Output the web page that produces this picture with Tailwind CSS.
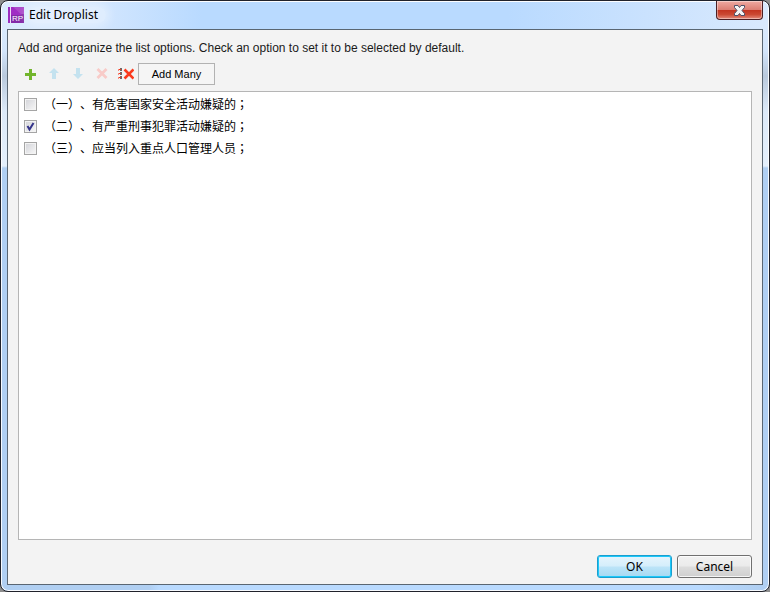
<!DOCTYPE html>
<html lang="zh-CN">
<head>
<meta charset="utf-8">
<title>Edit Droplist</title>
<script src="https://cdn.jsdelivr.net/npm/@tailwindcss/browser@4"></script>
</head>
<body class="h-dvh bg-[#8e8e8e] font-['Liberation_Sans','Noto_Sans_CJK_SC',sans-serif] text-xs text-[#1a1a1a]">
<div class="relative flex h-full flex-col rounded-lg border border-[#20222b] bg-[linear-gradient(to_bottom,#e0eefe_0px,#d3e5fb_50px,#b9c9dc_75px,#dce9f8_110px,#e4effb_165px,#b0cff2_167px,#b0cff2_100%)] px-1.5 pb-1.5 inset-ring inset-ring-white/90">
  <div class="absolute inset-x-px top-px h-7 rounded-t-md bg-[linear-gradient(to_right,#dcebfe_0px,#d4e7fe_90px,#b9daff_200px,#b9daff_66%,#d9e9fd_100%)]"></div>
  <div class="absolute inset-x-2 bottom-px h-1.5 bg-[linear-gradient(to_right,#b0cff2_140px,#b9daff_150px,#b9daff_92%,#b0cff2_100%)]"></div>
  <header class="relative flex h-7 shrink-0 items-center gap-[5px] pl-px">
    <svg class="size-4 shrink-0" viewBox="0 0 16 16">
      <path fill="#9c2cbf" d="M0 0h16v16H0z"/>
      <path fill="#ac49ca" d="M3 0h13v7H3z"/>
      <path fill="#842aa8" d="M3 7h13v9H3z"/>
      <path fill="#a02cc4" d="M3 0h2l9 8H3z"/>
      <path fill="#f0dcf7" d="M2 0h1v16H2z"/>
      <text x="4" y="14" class="fill-white font-['Liberation_Sans',sans-serif] text-[8px]">RP</text>
    </svg>
    <h1 class="rounded-full bg-white/30 pr-2 font-['Noto_Sans',sans-serif] text-xs text-black shadow-[0_0_8px_4px_rgb(255_255_255/0.3)]">Edit Droplist</h1>
    <button aria-label="Close" class="ml-auto flex h-[19px] w-[47px] items-center justify-center self-start rounded-b-[4px] border border-t-0 border-[#4b1f24] bg-[linear-gradient(to_bottom,#efaaa2_0%,#dc7f74_48%,#c3331f_50%,#cb4933_75%,#e48b7c_100%)] inset-ring inset-ring-white/40">
      <svg class="h-[11px] w-[13px]" viewBox="0 0 13 11"><path fill="#f4f4f4" stroke="#4d5068" d="M1.500 .5h3.500L6.500 2.500 8 .5h3.500V2.500L9 5.500l2.500 3v2H8L6.500 8.500 5 10.500H1.500v-2L4 5.500 1.500 2.500z"/></svg>
    </button>
  </header>
  <main class="relative flex min-h-0 flex-1 flex-col border border-[#5a6672] bg-[#f3f3f3] px-2.5 pb-1.5 pt-2.5">
    <p class="h-4 leading-4">Add and organize the list options. Check an option to set it to be selected by default.</p>
    <div class="mt-[7px] flex h-[22px] shrink-0 items-center">
      <button aria-label="Add" class="flex h-5 w-6 items-center justify-center"><svg class="size-3" viewBox="0 0 12 12"><path fill="#72b52c" d="M5 1h3v4h4v3H8v4H5V8H1V5h4z"/></svg></button>
      <button aria-label="Move up" disabled class="flex h-5 w-6 items-center justify-center"><svg class="size-3" viewBox="0 0 12 12"><path fill="#c4e2ef" d="M6 0L11 5H8v6H4V5H1z"/></svg></button>
      <button aria-label="Move down" disabled class="flex h-5 w-6 items-center justify-center"><svg class="size-3" viewBox="0 0 12 12"><path fill="#c4e2ef" d="M6 11L1 6h3V0h4v6h3z"/></svg></button>
      <button aria-label="Delete" disabled class="flex h-5 w-6 items-center justify-center"><svg class="size-3" viewBox="0 0 12 12"><path fill="none" stroke="#f8cbc8" stroke-width="2.800" d="M1.500 1l9 9M10.500 1l-9 9"/></svg></button>
      <button aria-label="Delete all" class="flex h-5 w-6 items-center justify-center"><svg class="h-3 w-4" viewBox="0 0 16 12"><path fill="#f58d80" d="M0 1h1v2H0zM0 5h1v2H0zM0 9h1v2H0z"/><path fill="#6a6a6a" d="M2 0h2v3H2zM2 4h2v3H2zM2 8h2v3H2z"/><path fill="#f23a1d" d="M1 1h2v1H1zM1 5h2v1H1zM1 9h2v1H1z"/><path fill="none" stroke="#fb3b1e" stroke-width="2.600" d="M6.500 1.500l9 9M15.500 1.500l-9 9"/></svg></button>
      <button class="h-[22px] w-[77px] border border-[#b2b2b2] bg-[#f5f5f5] text-[11px] text-black">Add Many</button>
    </div>
    <ul class="mt-1.5 min-h-0 flex-1 border border-[#b5b5b5] bg-white px-[5px] py-px font-['Noto_Sans_CJK_SC',sans-serif] text-black [text-spacing-trim:space-all]">
      <li class="h-[22px]"><label class="flex h-full items-center gap-[7px]"><span class="relative flex shrink-0"><input type="checkbox" class="peer size-[13px] appearance-none border border-[#a5a5a5] bg-linear-to-br from-[#d2d3d8] to-[#f8f8f8] inset-ring inset-ring-[#f3f3f3]"><svg class="pointer-events-none absolute inset-0 hidden size-[13px] peer-checked:block" viewBox="0 0 13 13"><path fill="none" stroke="#34348a" stroke-width="2" d="M3.500 6l2 3.500L9.500 3"/></svg></span><span class="whitespace-nowrap"><span class="font-['Noto_Sans_CJK_TC',sans-serif]" lang="zh-TW">（</span>一<span class="font-['Noto_Sans_CJK_TC',sans-serif]" lang="zh-TW">）</span>、有危害国家安全活动嫌疑的<span class="font-['Noto_Sans_CJK_TC',sans-serif]" lang="zh-TW">；</span></span></label></li>
      <li class="h-[22px]"><label class="flex h-full items-center gap-[7px]"><span class="relative flex shrink-0"><input type="checkbox" checked class="peer size-[13px] appearance-none border border-[#a5a5a5] bg-linear-to-br from-[#d2d3d8] to-[#f8f8f8] inset-ring inset-ring-[#f3f3f3]"><svg class="pointer-events-none absolute inset-0 hidden size-[13px] peer-checked:block" viewBox="0 0 13 13"><path fill="none" stroke="#34348a" stroke-width="2" d="M3.500 6l2 3.500L9.500 3"/></svg></span><span class="whitespace-nowrap"><span class="font-['Noto_Sans_CJK_TC',sans-serif]" lang="zh-TW">（</span>二<span class="font-['Noto_Sans_CJK_TC',sans-serif]" lang="zh-TW">）</span>、有严重刑事犯罪活动嫌疑的<span class="font-['Noto_Sans_CJK_TC',sans-serif]" lang="zh-TW">；</span></span></label></li>
      <li class="h-[22px]"><label class="flex h-full items-center gap-[7px]"><span class="relative flex shrink-0"><input type="checkbox" class="peer size-[13px] appearance-none border border-[#a5a5a5] bg-linear-to-br from-[#d2d3d8] to-[#f8f8f8] inset-ring inset-ring-[#f3f3f3]"><svg class="pointer-events-none absolute inset-0 hidden size-[13px] peer-checked:block" viewBox="0 0 13 13"><path fill="none" stroke="#34348a" stroke-width="2" d="M3.500 6l2 3.500L9.500 3"/></svg></span><span class="whitespace-nowrap"><span class="font-['Noto_Sans_CJK_TC',sans-serif]" lang="zh-TW">（</span>三<span class="font-['Noto_Sans_CJK_TC',sans-serif]" lang="zh-TW">）</span>、应当列入重点人口管理人员<span class="font-['Noto_Sans_CJK_TC',sans-serif]" lang="zh-TW">；</span></span></label></li>
    </ul>
    <footer class="mt-[15px] flex shrink-0 justify-end gap-[5px] font-['Noto_Sans',sans-serif] text-black">
      <button class="h-[23px] w-[75px] rounded-[3px] border border-[#1b9fce] bg-[linear-gradient(to_bottom,#e6f5fd_0%,#d5eefb_48%,#bce4f8_52%,#a5d9f2_100%)] leading-5 inset-ring inset-ring-[#1cc8fa]">OK</button>
      <button class="h-[23px] w-[75px] rounded-[3px] border border-[#707070] bg-[linear-gradient(to_bottom,#f2f2f2_0%,#ebebeb_48%,#dddddd_52%,#cfcfcf_100%)] leading-5 inset-ring inset-ring-white/80">Cancel</button>
    </footer>
  </main>
</div>
</body>
</html>
